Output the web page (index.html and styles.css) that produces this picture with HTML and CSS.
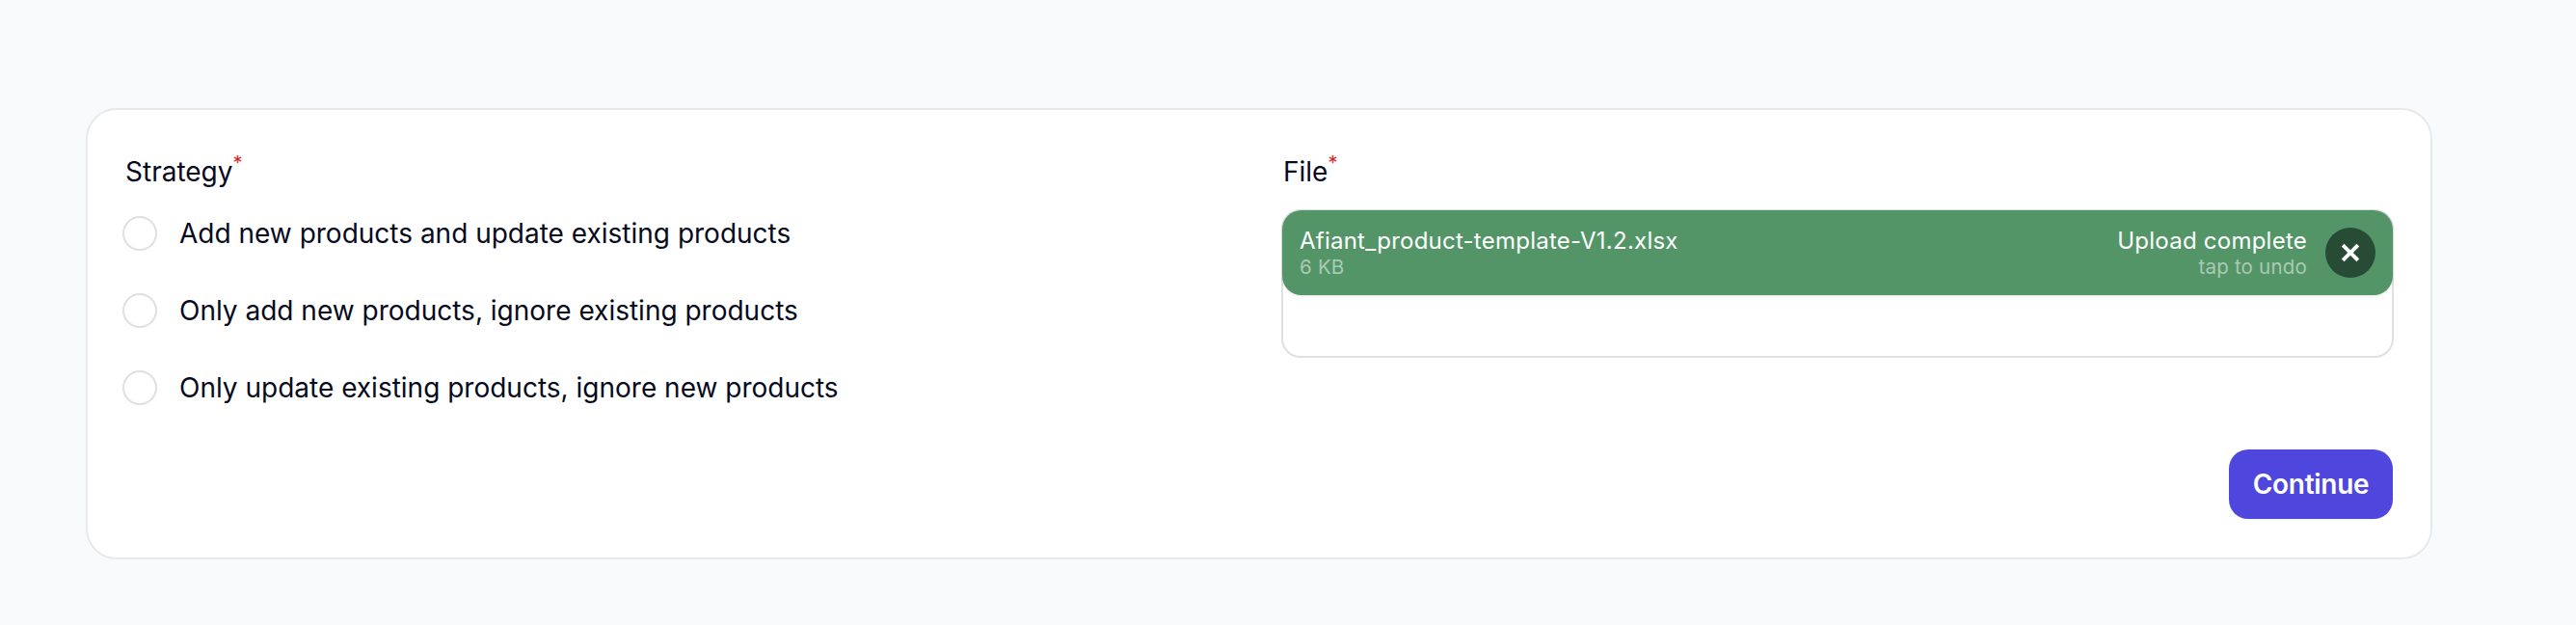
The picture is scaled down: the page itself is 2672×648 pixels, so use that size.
FILE: index.html
```html
<!DOCTYPE html>
<html lang="en">
<head>
<meta charset="utf-8">
<title>Import products</title>
<link rel="stylesheet" href="styles.css">
</head>
<body>
<main class="card">
  <div class="columns">
    <section class="field">
      <div class="label">Strategy<span class="req">*</span></div>
      <div class="radios">
        <label class="radio"><span class="dot"></span><span>Add new products and update existing products</span></label>
        <label class="radio"><span class="dot"></span><span>Only add new products, ignore existing products</span></label>
        <label class="radio"><span class="dot"></span><span>Only update existing products, ignore new products</span></label>
      </div>
    </section>
    <section class="field">
      <div class="label file-label">File<span class="req">*</span></div>
      <div class="drop">
        <div class="item">
          <div class="meta">
            <div class="main">Afiant_product-template-V1.2.xlsx</div>
            <div class="sub">6 KB</div>
          </div>
          <div class="meta end">
            <div class="main">Upload complete</div>
            <div class="sub">tap to undo</div>
          </div>
          <button class="undo" aria-label="Undo">
            <svg viewBox="0 0 26 26" width="52" height="52" aria-hidden="true"><path d="M9.8 9.8l6.4 6.4M16.2 9.8l-6.4 6.4" fill="none" stroke="#fff" stroke-width="2" stroke-linecap="square"/></svg>
          </button>
        </div>
      </div>
    </section>
  </div>
  <div class="actions"><button class="primary">Continue</button></div>
</main>
</body>
</html>
```
FILE: styles.css
```css
* { box-sizing: border-box; }
html, body { margin: 0; height: 100%; }
body {
  background: #f9fafc;
  padding: 112px 149px 0 89px;
  font-family: Inter, "Liberation Sans", sans-serif;
  color: #070b1d;
  overflow: hidden;
}
.card {
  height: 468px;
  background: #fff;
  border: 2px solid #e8e9eb;
  border-radius: 32px;
  padding: 44px 38px 0 39px;
}
.columns {
  display: grid;
  grid-template-columns: 1161px 1fr;
  column-gap: 38px;
}
.label {
  font-size: 28px;
  line-height: 40px;
  font-weight: 400;
  height: 40px;
}
.file-label { padding-left: 2px; }
.req {
  color: #dc2626;
  font-size: 20px;
  line-height: 20px;
  vertical-align: 12px;
}
.radios {
  display: flex;
  flex-direction: column;
  gap: 44px;
  margin-top: 26px;
}
.radio {
  display: flex;
  align-items: center;
  gap: 23px;
  height: 36px;
  font-size: 28px;
  line-height: 36px;
}
.dot {
  width: 36px;
  height: 36px;
  border-radius: 50%;
  border: 2px solid #dfe0e2;
  background: #fff;
  margin-left: -3px;
}
.drop {
  margin-top: 19px;
  height: 154px;
  border: 2px solid #dfe0e2;
  border-radius: 20px;
  background: #fff;
}
.item {
  height: 88px;
  margin: -1px -1px 0;
  background: #539567;
  border-radius: 20px;
  display: flex;
  align-items: center;
  padding: 0 18px 0 18px;
  color: #fff;
  box-shadow: 0 1px 3px rgba(0,0,0,.1);
}
.meta { display: flex; flex-direction: column; flex: 1; }
.meta.end { align-items: flex-end; margin-right: 19px; }
.main { font-size: 24px; line-height: 30px; letter-spacing: .01em; }
.sub { font-size: 20.5px; line-height: 24px; color: rgba(255,255,255,.5); letter-spacing: .01em; }
.undo {
  width: 52px;
  height: 52px;
  padding: 0;
  border: 0;
  border-radius: 50%;
  background: #284b36;
  display: block;
}
.undo svg { display: block; }
.actions {
  display: flex;
  justify-content: flex-end;
  margin-top: 46px;
  padding-right: 1px;
}
.primary {
  width: 170px;
  height: 72px;
  border: 0;
  border-radius: 20px;
  background: #4f46dd;
  color: #fff;
  font: 600 28px/36px Inter, "Liberation Sans", sans-serif;
  letter-spacing: -.01em;
  box-shadow: 0 1px 2px rgba(0,0,0,.05);
}
```
